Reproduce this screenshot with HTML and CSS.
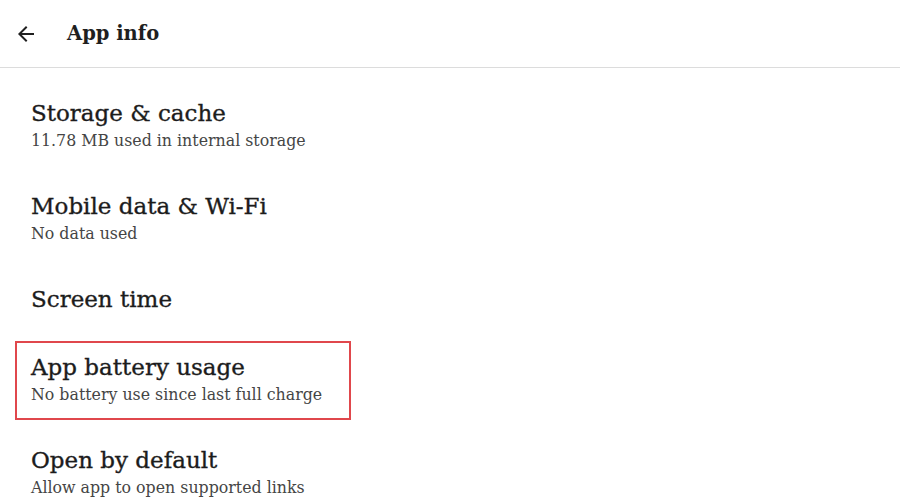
FILE: index.html
```html
<!DOCTYPE html>
<html>
<head>
<meta charset="utf-8">
<link rel="stylesheet" href="styles.css">
</head>
<body>
<header class="appbar">
  <svg class="back" width="24" height="24" viewBox="0 0 24 24"><path d="M20 11H7.83l5.59-5.59L12 4l-8 8 8 8 1.41-1.41L7.83 13H20v-2z" fill="#1f1f1f"/></svg>
  <h1 class="title">App info</h1>
</header>
<main class="list">
  <div class="item">
    <div class="item-title">Storage &amp; cache</div>
    <div class="item-sub">11.78 MB used in internal storage</div>
  </div>
  <div class="item">
    <div class="item-title">Mobile data &amp; Wi-Fi</div>
    <div class="item-sub">No data used</div>
  </div>
  <div class="item single">
    <div class="item-title">Screen time</div>
  </div>
  <div class="item highlight">
    <div class="item-title">App battery usage</div>
    <div class="item-sub">No battery use since last full charge</div>
  </div>
  <div class="item last">
    <div class="item-title">Open by default</div>
    <div class="item-sub">Allow app to open supported links</div>
  </div>
</main>
</body>
</html>
```
FILE: styles.css
```css
html, body {
  margin: 0;
  padding: 0;
  background: #ffffff;
  font-family: "DejaVu Serif", "Liberation Serif", serif;
  color: #1f1f1f;
  overflow: hidden;
}
.appbar {
  height: 68px;
  display: flex;
  align-items: center;
  padding-left: 14px;
  border-bottom: 1px solid #dcdcdc;
  box-sizing: border-box;
}
.back {
  width: 24px;
  height: 24px;
  margin-right: 29px;
}
.title {
  margin: 0;
  font-size: 19.5px;
  font-weight: bold;
  color: #1f1f1f;
}
.list {
  display: flex;
  flex-direction: column;
  align-items: flex-start;
  padding-top: 28px;
}
.item {
  margin-left: 15px;
  padding: 0 22px 0 14px;
  margin-bottom: 35px;
  border: 2px solid transparent;
}
.item.single {
  margin-bottom: 25px;
}
.item.highlight {
  border-color: #e0474c;
  padding-top: 9px;
  padding-right: 27px;
  padding-bottom: 12px;
  margin-bottom: 23px;
}
.item.last {
  margin-bottom: 0;
  border-bottom-width: 0;
}
.item-title {
  font-size: 23px;
  line-height: 30px;
  color: #1c1c1c;
  -webkit-text-stroke: 0.35px #1c1c1c;
}
.item-sub {
  margin-top: 2px;
  font-size: 15.8px;
  line-height: 22px;
  color: #454545;
}
```
